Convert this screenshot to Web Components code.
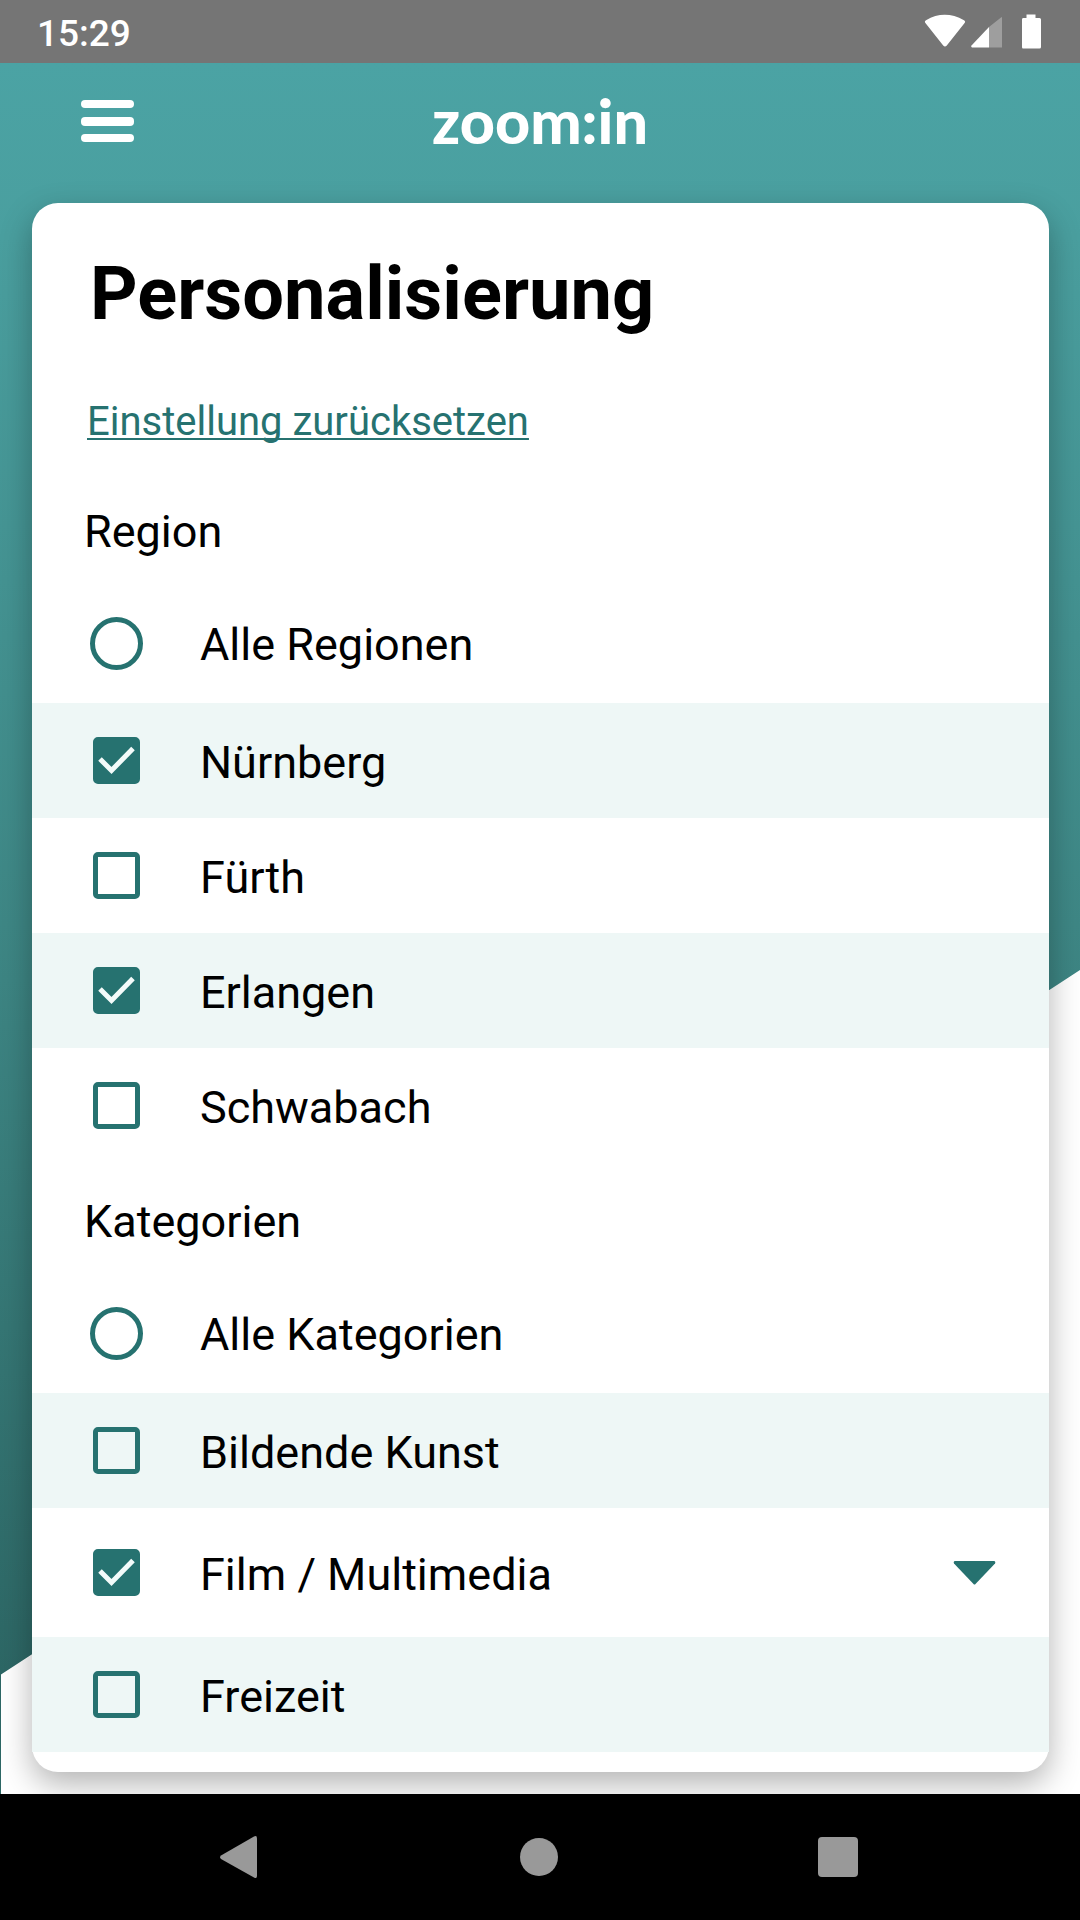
<!DOCTYPE html>
<html lang="de">
<head>
<meta charset="utf-8">
<meta name="viewport" content="width=device-width, initial-scale=1">
<title>zoom:in – Personalisierung</title>
<style>
  html, body { margin: 0; }
  body { font-family: Roboto, sans-serif; color: #000; background: #fff; }
</style>
</head>
<body>
<zoom-app>
  <status-bar slot="status" time="15:29"></status-bar>
  <app-header slot="header">zoom:in</app-header>
  <settings-card heading="Personalisierung" reset="Einstellung zurücksetzen">
    <option-group label="Region">
      <option-row type="radio">Alle Regionen</option-row>
      <option-row shaded checked>Nürnberg</option-row>
      <option-row>Fürth</option-row>
      <option-row shaded checked>Erlangen</option-row>
      <option-row>Schwabach</option-row>
    </option-group>
    <option-group label="Kategorien">
      <option-row type="radio">Alle Kategorien</option-row>
      <option-row shaded>Bildende Kunst</option-row>
      <option-row checked expandable>Film / Multimedia</option-row>
      <option-row shaded>Freizeit</option-row>
    </option-group>
  </settings-card>
  <nav-bar slot="nav"></nav-bar>
</zoom-app>

<script>
const define = (name, render) => customElements.define(name, class extends HTMLElement {
  connectedCallback() {
    if (this.shadowRoot) return;
    this.attachShadow({ mode: 'open' }).innerHTML = render(this);
  }
});

define('zoom-app', () => `
  <style>
    :host { display: flex; flex-direction: column; min-height: 100vh; }
    main { flex: 1; position: relative; isolation: isolate; display: flex; flex-direction: column; padding-bottom: 22px; overflow: hidden; }
    main::before {
      content: ""; position: absolute; inset: 0; z-index: -1;
      background: linear-gradient(#4ba3a4 0%, #4a9f9f 10%, #3d8583 53%, #2d6765 93%);
      clip-path: polygon(0 0, 100% 0, 100% 52.4%, 1px 93.1%, 1px 100%, 0 100%);
    }
  </style>
  <slot name="status"></slot>
  <main><slot name="header"></slot><slot></slot></main>
  <slot name="nav"></slot>`);

define('status-bar', el => `
  <style>
    :host { display: flex; align-items: center; justify-content: space-between; height: 63px; padding: 0 39px 0 37px; background: #757575; color: #fff; font-size: 37px; font-weight: 500; line-height: 48px; }
    time { padding-top: 4px; }
    svg { display: block; }
  </style>
  <time>${el.getAttribute('time')}</time>
  <svg width="120" height="36" viewBox="0 0 120 36" fill="#fff" aria-hidden="true">
    <path d="M4.600 9.200Q3 7.500 5 6.200Q23.500 -4.600 43 6.200Q45 7.500 43.400 9.200L25.800 31.500Q24 33.500 22.200 31.500Z"/>
    <path d="M80 3.500Q81 2.500 81 4V33.500H68V13Z" opacity=".3"/>
    <path d="M68 13V33.500H51Q49.500 33 50.500 31.500Z"/>
    <path d="M105.500 .500H114.500V4H118.500Q120 4 120 5.500V33Q120 34.500 118.500 34.500H102Q101 34.500 101 33V5.500Q101 4 102 4H105.500Z"/>
  </svg>`);

define('app-header', () => `
  <style>
    :host { display: grid; grid-template-columns: 1fr auto 1fr; align-items: center; height: 140px; box-sizing: border-box; padding: 0 75px 24px; color: #fff; }
    button { justify-self: start; border: 0; background: none; padding: 6px; display: flex; }
    strong { font: 900 61px/72px Lato, Roboto, sans-serif; }
  </style>
  <button aria-label="Menü">
    <svg width="53" height="42" viewBox="0 0 53 42" fill="#fff">
      <rect width="53" height="8" rx="4"/><rect y="17" width="53" height="9" rx="4"/><rect y="34" width="53" height="8" rx="4"/>
    </svg>
  </button>
  <strong><slot></slot></strong>`);

define('settings-card', el => `
  <style>
    :host { display: block; flex: 1; margin: 0 31px 0 32px; padding: 47px 0 20px; background: #fff; border-radius: 26px; box-shadow: 0 12px 32px rgba(0, 0, 0, .3); }
    h1 { margin: 0 58px 60px; font-size: 74px; line-height: 88px; font-weight: 700; }
    p { margin: 0 55px 27px; font-size: 40px; line-height: 48px; }
    a { color: #267270; text-decoration: underline 2px; text-underline-offset: 3px; text-decoration-skip-ink: none; }
  </style>
  <h1>${el.getAttribute('heading')}</h1>
  <p><a href="#reset">${el.getAttribute('reset')}</a></p>
  <slot></slot>`);

define('option-group', el => `
  <style>
    :host { display: block; }
    section { display: flex; flex-direction: column; }
    h2 { margin: 0; padding: 32px 52px 29px; font-size: 45px; line-height: 54px; font-weight: 400; }
  </style>
  <section aria-labelledby="title"><h2 id="title">${el.getAttribute('label')}</h2><slot></slot></section>`);

define('option-row', el => {
  const radio = el.getAttribute('type') === 'radio';
  return `
  <style>
    :host { display: flex; align-items: center; min-height: 115px; padding: 0 33px 0 58px; font-size: 45px; line-height: 54px; }
    :host([type="radio"]) { min-height: 111px; margin-bottom: 4px; }
    :host([expandable]) { min-height: 129px; }
    :host([shaded]) { background: #eef7f6; }
    .control { display: grid; place-items: center; width: 53px; margin-right: 57px; }
    .control > * { grid-area: 1 / 1; }
    input { appearance: none; box-sizing: border-box; margin: 0; width: 47px; height: 47px; border: 5px solid #267270; border-radius: 5px; }
    input[type="radio"] { width: 53px; height: 53px; border-radius: 50%; }
    input[type="checkbox"]:checked { background: #267270; }
    .control svg { visibility: hidden; pointer-events: none; }
    input:checked + svg { visibility: visible; }
    label { flex: 1; padding-top: 4px; }
    :host([type="radio"]) label { padding-top: 2px; }
    button { border: 0; background: none; padding: 20px; display: flex; }
  </style>
  <span class="control">
    <input id="option" type="${radio ? 'radio' : 'checkbox'}" ${el.hasAttribute('checked') ? 'checked' : ''}>
    ${radio ? '' : '<svg width="47" height="47" viewBox="0 0 47 47" fill="none" stroke="#f3fbfa" stroke-width="5"><path d="M7 22L18.500 33.500L40 11.500"/></svg>'}
  </span>
  <label for="option"><slot></slot></label>
  ${el.hasAttribute('expandable') ? '<button aria-label="Aufklappen"><svg width="43" height="24" viewBox="0 0 43 24"><path d="M2 0H41Q43 .500 42 2.500L22.500 23Q21.500 24 20.500 23L1 2.500Q0 .500 2 0Z" fill="#267270"/></svg></button>' : ''}`;
});

define('nav-bar', () => `
  <style>
    :host { display: block; background: #000; }
    nav { display: grid; grid-template-columns: repeat(3, 1fr); place-items: center; height: 126px; padding: 0 92px 0 90px; }
    button { border: 0; background: none; padding: 0; display: flex; }
    svg { fill: #999; }
  </style>
  <nav>
    <button aria-label="Zurück"><svg width="48" height="48" viewBox="0 0 48 48"><path d="M38 3.500Q41 2 41 5.500V43Q41 46 38 44.500L5 26Q3 24.300 5 22.500Z"/></svg></button>
    <button aria-label="Start"><svg width="48" height="48" viewBox="0 0 48 48"><circle cx="24" cy="24" r="19"/></svg></button>
    <button aria-label="Übersicht"><svg width="48" height="48" viewBox="0 0 48 48"><rect x="4" y="4" width="40" height="40" rx="4"/></svg></button>
  </nav>`);
</script>
</body>
</html>
